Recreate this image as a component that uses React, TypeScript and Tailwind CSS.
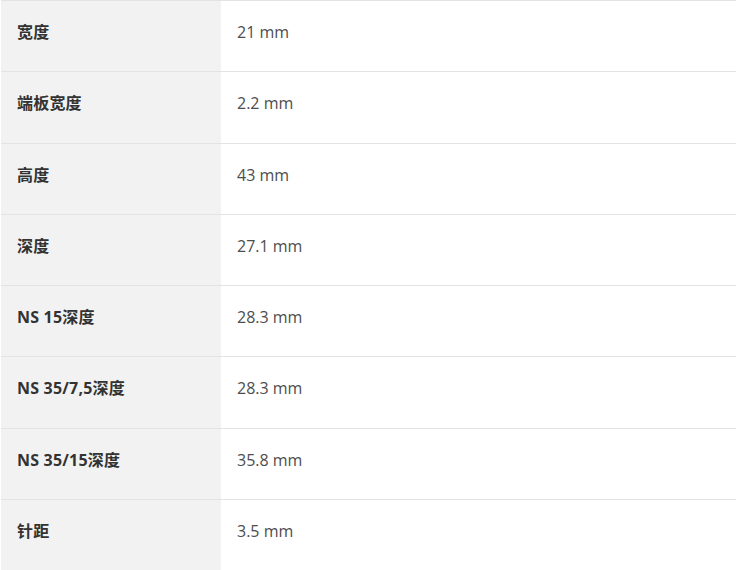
const rows: [string, string][] = [
  ["宽度", "21 mm"],
  ["端板宽度", "2.2 mm"],
  ["高度", "43 mm"],
  ["深度", "27.1 mm"],
  ["NS 15深度", "28.3 mm"],
  ["NS 35/7,5深度", "28.3 mm"],
  ["NS 35/15深度", "35.8 mm"],
  ["针距", "3.5 mm"],
];

export default function App() {
  return (
    <div className="min-h-screen bg-white pl-[1px] font-['Open_Sans','Noto_Sans_CJK_SC',sans-serif]">
      <div className="w-[735px]">
        {rows.map(([label, value]) => (
          <div key={label} className="flex h-[71.3px] border-t border-[#e3e3e6]">
            <div className="w-[220px] shrink-0 bg-[#f2f2f2] px-4 pt-[19px] text-[16px] leading-6 font-bold tracking-[0.2px] text-[#333]">
              {label}
            </div>
            <div className="flex-1 px-4 pt-[19px] text-[16px] leading-6 text-[#4d4d4d]">
              {value}
            </div>
          </div>
        ))}
      </div>
    </div>
  );
}
